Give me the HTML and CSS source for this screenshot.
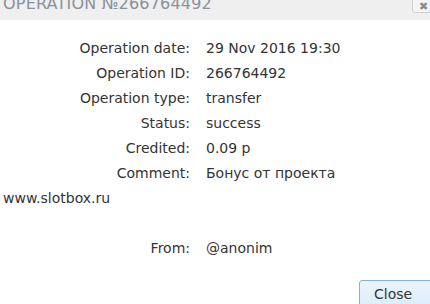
FILE: index.html
```html
<!DOCTYPE html>
<html lang="en">
<head>
    <meta charset="UTF-8">
    <title>Operation</title>
    <link rel="stylesheet" href="styles.css">
</head>
<body>
    <div class="dialog">
        <div class="dialog-titlebar">
            <span class="dialog-title">Operation №266764492</span>
            <button class="titlebar-close" title="Close">✖</button>
        </div>

        <div class="dialog-content">
            <div class="row"><span class="label">Operation date:</span><span class="value">29 Nov 2016 19:30</span></div>
            <div class="row"><span class="label">Operation ID:</span><span class="value">266764492</span></div>
            <div class="row"><span class="label">Operation type:</span><span class="value">transfer</span></div>
            <div class="row"><span class="label">Status:</span><span class="value">success</span></div>
            <div class="row"><span class="label">Credited:</span><span class="value">0.09 р</span></div>
            <div class="row"><span class="label">Comment:</span>Бонус от проекта www.slotbox.ru</div>
            <div class="row empty"></div>
            <div class="row"><span class="label">From:</span><span class="value">@anonim</span></div>
        </div>

        <div class="dialog-buttons">
            <button class="close-btn">Close</button>
        </div>
    </div>
</body>
</html>
```

FILE: styles.css
```css
* {
    margin: 0;
    padding: 0;
    box-sizing: border-box;
}

body {
    background: #fff;
    overflow: hidden;
    font-family: "DejaVu Sans", sans-serif;
    color: #333;
}

.dialog {
    width: 452px;
}

.dialog-titlebar {
    height: 20px;
    background: #efefef;
    display: flex;
    justify-content: space-between;
    align-items: flex-start;
    overflow: hidden;
}

.dialog-title {
    margin-top: -6px;
    padding-left: 3px;
    font-family: "DejaVu Sans", sans-serif;
    font-size: 16px;
    line-height: 20px;
    letter-spacing: 0.2px;
    text-transform: uppercase;
    color: #8a919b;
}

.titlebar-close {
    width: 30px;
    height: 14px;
    margin-right: 10px;
    margin-top: -1px;
    border: 1px solid #cfcfcf;
    border-radius: 0 0 0 3px;
    background: #f4f4f4;
    color: #8c8c8c;
    font-size: 11px;
    line-height: 12px;
    text-align: left;
    padding-left: 6px;
}

.dialog-content {
    padding: 16px 22px 0 3px;
    font-size: 14px;
    line-height: 25px;
}

.row {
    min-height: 25px;
}

.label {
    display: inline-block;
    width: 187px;
    margin-right: 16px;
    text-align: right;
}

.dialog-buttons {
    padding-top: 19px;
    text-align: right;
}

.close-btn {
    width: 80px;
    height: 28px;
    margin-right: 13px;
    border: 1px solid #7eb4ea;
    border-radius: 3px;
    background: linear-gradient(#ecf4fc, #dcecfc);
    font-family: "DejaVu Sans", Tahoma, sans-serif;
    font-size: 14px;
    color: #333;
    text-align: left;
    padding-left: 14px;
}
```
